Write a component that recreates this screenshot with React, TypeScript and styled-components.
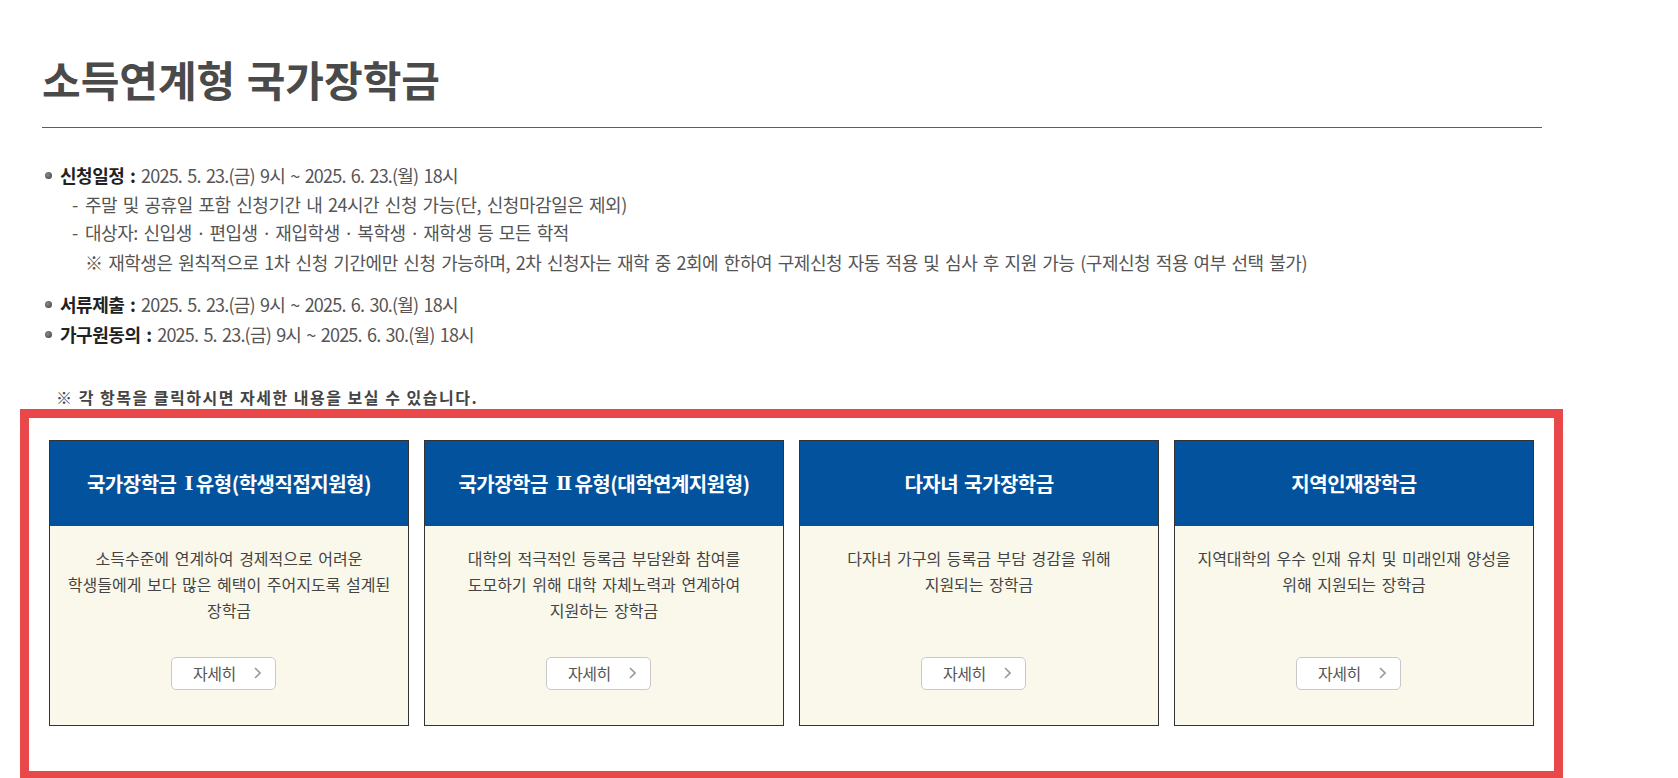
import React from 'react';
import styled, { createGlobalStyle } from 'styled-components';

const GlobalStyle = createGlobalStyle`
  html, body { margin: 0; padding: 0; background: #fff; }
  body { font-family: "Noto Sans CJK KR", "Noto Sans", sans-serif; color: #555; }
  * { box-sizing: border-box; }
`;

const Page = styled.div`
  width: 1678px;
  height: 778px;
  overflow: hidden;
`;

const Content = styled.div`
  width: 1542px;
  padding-left: 42px;
`;

const Title = styled.h1`
  margin: 54px 0 0;
  padding-bottom: 23px;
  border-bottom: 1px solid #5c5a6e;
  font-size: 42px;
  line-height: 50px;
  font-weight: 700;
  color: #4a4a4a;
  letter-spacing: 0px;
  word-spacing: 2px;
`;

const InfoList = styled.ul`
  list-style: none;
  margin: 33px 0 0;
  padding: 0;
  font-size: 18px;
  line-height: 28.5px;
  letter-spacing: -0.45px;
  word-spacing: 2px;
  color: #555;
`;

const InfoItem = styled.li<{ $gap: number }>`
  display: flex;
  align-items: flex-start;
  margin-bottom: ${(p) => p.$gap}px;
`;

const Dot = styled.span`
  flex: none;
  width: 7px;
  height: 7px;
  border-radius: 50%;
  background: radial-gradient(circle at 40% 40%, #8a8a8a, #3a3a3a);
  margin: 11px 8px 0 3px;
`;

const ItemBody = styled.div`
  display: flex;
  flex-direction: column;
`;

const Label = styled.b`
  font-weight: 700;
  color: #222;
`;

const DateText = styled.span`
  letter-spacing: -0.8px;
  word-spacing: 2px;
`;

const Sep = styled.span`
  font-family: "Noto Sans", "DejaVu Sans", sans-serif;
  margin: 0 1px;
`;

const SubLine = styled.div<{ $indent: number }>`
  display: flex;
  padding-left: ${(p) => p.$indent}px;
`;

const Dash = styled.span`
  flex: none;
  width: 13px;
`;

const Note = styled.p`
  margin: 38px 0 0;
  padding-left: 14px;
  font-size: 16px;
  line-height: 20px;
  font-weight: 700;
  color: #444;
  letter-spacing: 1.5px;
`;

const HighlightBox = styled.section`
  margin: 2px 0 0 20px;
  width: 1543px;
  border: 9px solid #e9484a;
  padding: 22px 20px 45px;
  display: grid;
  grid-template-columns: repeat(4, 360px);
  gap: 15px;
`;

const Card = styled.div`
  height: 286px;
  border: 1px solid #333;
  background: #faf8ea;
  display: flex;
  flex-direction: column;
`;

const CardHeader = styled.div`
  height: 85px;
  flex: none;
  background: #02529e;
  display: flex;
  align-items: center;
  justify-content: center;
  color: #fff;
  font-size: 20px;
  font-weight: 700;
  letter-spacing: -0.5px;
  word-spacing: 2px;
`;

const Numeral = styled.span`
  font-family: "DejaVu Serif", "Liberation Serif", serif;
  font-weight: 700;
  font-size: 19px;
  margin: 0 3px 0 8px;
`;

const CardBody = styled.div`
  flex: 1;
  display: flex;
  flex-direction: column;
  align-items: center;
  padding: 19px 8px 35px;
`;

const Desc = styled.p`
  flex: 1;
  margin: 0;
  text-align: center;
  font-size: 16px;
  line-height: 26px;
  color: #444;
  letter-spacing: 0px;
  word-spacing: 2px;
`;

const DetailButton = styled.button`
  width: 105px;
  height: 33px;
  margin-right: 11px;
  padding: 0 14px 0 21px;
  border: 1px solid #c9c9c9;
  border-radius: 5px;
  background: #fff;
  display: flex;
  align-items: center;
  justify-content: space-between;
  font-family: inherit;
  font-size: 16px;
  color: #555;
  letter-spacing: -0.5px;
  cursor: pointer;
`;

const Chevron = () => (
  <svg width="7" height="12" viewBox="0 0 7 12" fill="none">
    <polyline points="1,1 6,6 1,11" stroke="#9a9a9a" strokeWidth="1.6" />
  </svg>
);

type CardData = { title: React.ReactNode; key: string; lines: string[] };

const cards: CardData[] = [
  {
    key: 'c1',
    title: (
      <>
        국가장학금<Numeral>Ⅰ</Numeral>유형(학생직접지원형)
      </>
    ),
    lines: ['소득수준에 연계하여 경제적으로 어려운', '학생들에게 보다 많은 혜택이 주어지도록 설계된', '장학금'],
  },
  {
    key: 'c2',
    title: (
      <>
        국가장학금<Numeral>Ⅱ</Numeral>유형(대학연계지원형)
      </>
    ),
    lines: ['대학의 적극적인 등록금 부담완화 참여를', '도모하기 위해 대학 자체노력과 연계하여', '지원하는 장학금'],
  },
  {
    key: 'c3',
    title: '다자녀 국가장학금',
    lines: ['다자녀 가구의 등록금 부담 경감을 위해', '지원되는 장학금'],
  },
  {
    key: 'c4',
    title: '지역인재장학금',
    lines: ['지역대학의 우수 인재 유치 및 미래인재 양성을', '위해 지원되는 장학금'],
  },
];

const targets = ['신입생', '편입생', '재입학생', '복학생', '재학생'];

export default function App() {
  return (
    <Page>
      <GlobalStyle />
      <Content>
        <Title>소득연계형 국가장학금</Title>
        <InfoList>
          <InfoItem $gap={14}>
            <Dot />
            <ItemBody>
              <div>
                <Label>신청일정 :</Label> <DateText>2025. 5. 23.(금) 9시 ~ 2025. 6. 23.(월) 18시</DateText>
              </div>
              <SubLine $indent={12}>
                <Dash>-</Dash>
                <span>주말 및 공휴일 포함 신청기간 내 24시간 신청 가능(단, 신청마감일은 제외)</span>
              </SubLine>
              <SubLine $indent={12}>
                <Dash>-</Dash>
                <span>
                  대상자:{' '}
                  {targets.map((t, i) => (
                    <React.Fragment key={t}>
                      {i > 0 && (
                        <>
                          {' '}
                          <Sep>·</Sep>{' '}
                        </>
                      )}
                      {t}
                    </React.Fragment>
                  ))}{' '}
                  등 모든 학적
                </span>
              </SubLine>
              <SubLine $indent={25}>
                <span>
                  ※ 재학생은 원칙적으로 1차 신청 기간에만 신청 가능하며, 2차 신청자는 재학 중 2회에 한하여 구제신청 자동 적용 및 심사 후 지원 가능 (구제신청 적용 여부 선택 불가)
                </span>
              </SubLine>
            </ItemBody>
          </InfoItem>
          <InfoItem $gap={1.5}>
            <Dot />
            <ItemBody>
              <div>
                <Label>서류제출 :</Label> <DateText>2025. 5. 23.(금) 9시 ~ 2025. 6. 30.(월) 18시</DateText>
              </div>
            </ItemBody>
          </InfoItem>
          <InfoItem $gap={0}>
            <Dot />
            <ItemBody>
              <div>
                <Label>가구원동의 :</Label> <DateText>2025. 5. 23.(금) 9시 ~ 2025. 6. 30.(월) 18시</DateText>
              </div>
            </ItemBody>
          </InfoItem>
        </InfoList>
        <Note>※ 각 항목을 클릭하시면 자세한 내용을 보실 수 있습니다.</Note>
      </Content>
      <HighlightBox>
        {cards.map((c) => (
          <Card key={c.key}>
            <CardHeader>{c.title}</CardHeader>
            <CardBody>
              <Desc>
                {c.lines.map((l, i) => (
                  <React.Fragment key={i}>
                    {i > 0 && <br />}
                    {l}
                  </React.Fragment>
                ))}
              </Desc>
              <DetailButton type="button">
                <span>자세히</span>
                <Chevron />
              </DetailButton>
            </CardBody>
          </Card>
        ))}
      </HighlightBox>
    </Page>
  );
}
